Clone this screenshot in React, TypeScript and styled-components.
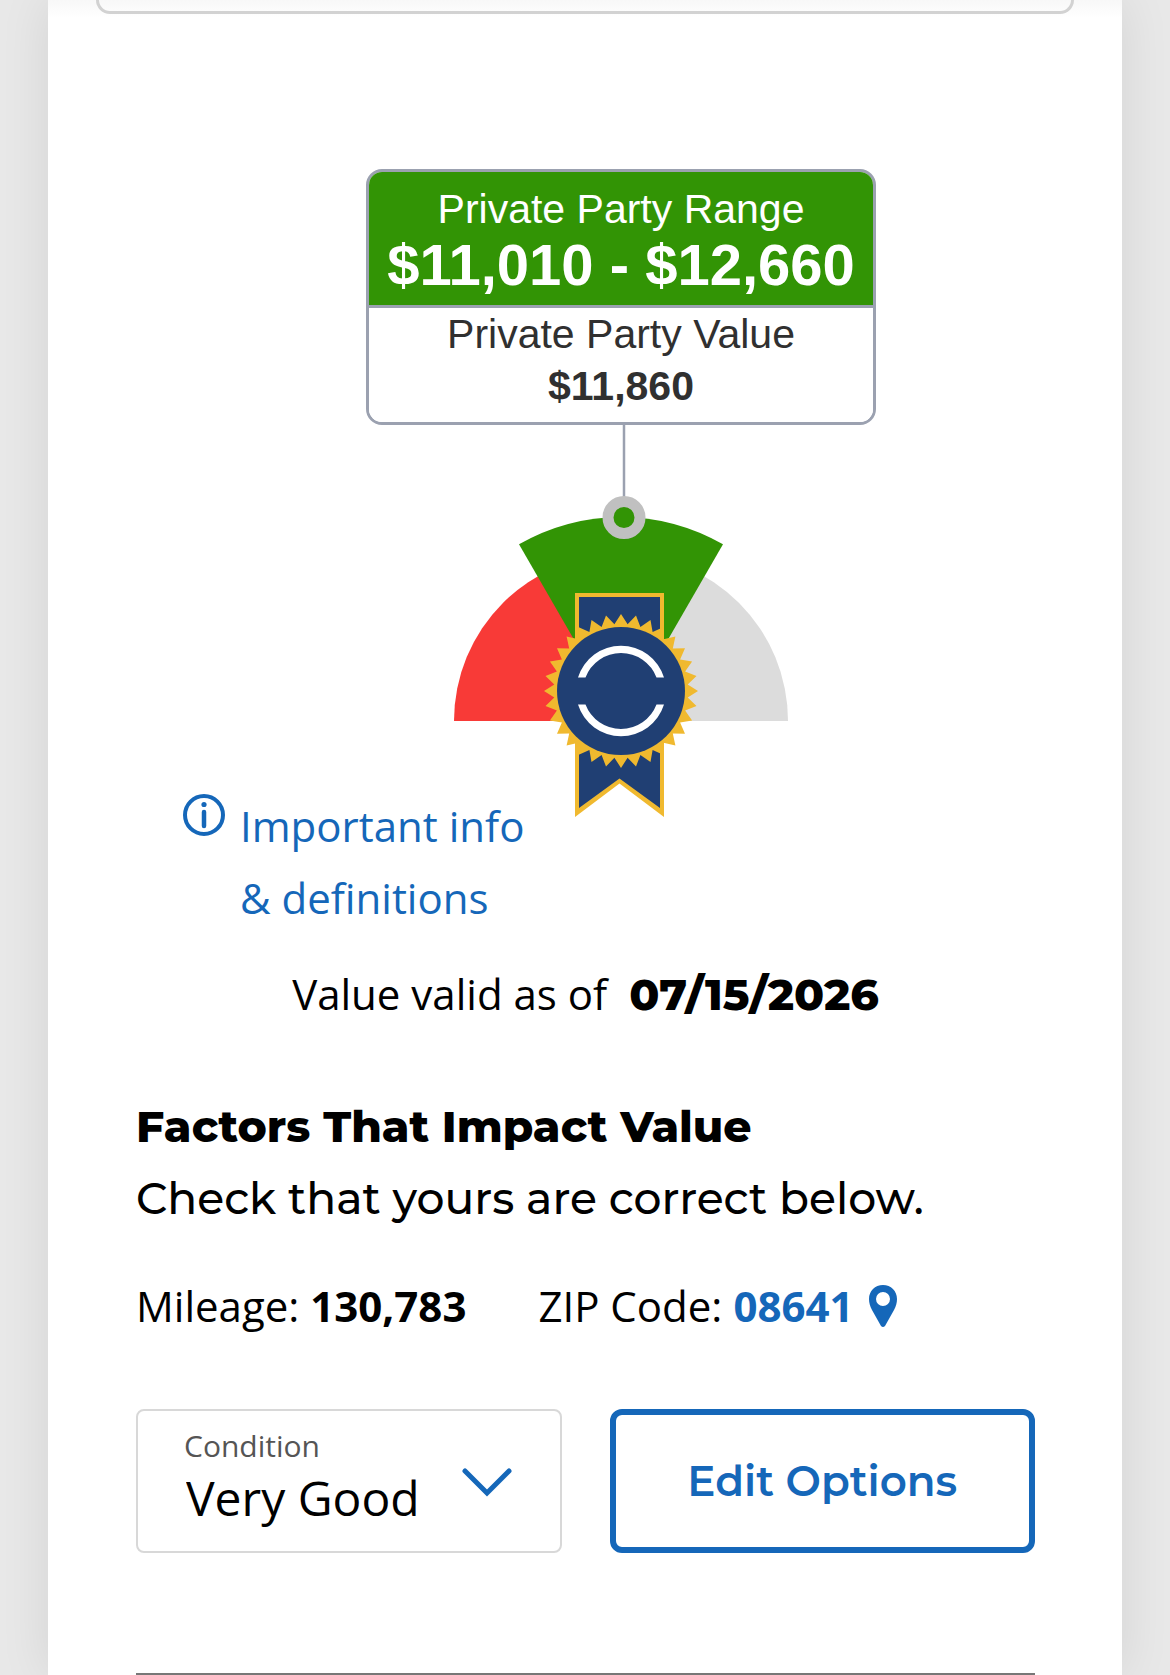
import React from "react";
import styled, { createGlobalStyle } from "styled-components";

const blue = "#1567b9";
const green = "#329405";
const gold = "#f0b92f";
const navy = "#203f73";
const slate = "#9ba1b0";

const bodyFont = `"Open Sans", "Noto Sans", sans-serif`;
const headingFont = `Montserrat, Inter, "Open Sans", sans-serif`;
const calloutFont = `"Liberation Sans", Arial, sans-serif`;

const GlobalStyle = createGlobalStyle`
  *, *::before, *::after { box-sizing: border-box; }
  body { margin: 0; background: #e8e8e8; color: #000; font-family: ${bodyFont}; }
`;

const Page = styled.div`
  padding: 0 48px;
  overflow: hidden;
`;

const Panel = styled.main`
  background: linear-gradient(#f8f8f8, #fff 18px);
  box-shadow: 0 0 48px rgba(0, 0, 0, 0.09);
`;

const PreviousCard = styled.div`
  height: 14px;
  margin: 0 48px;
  border: 3px solid #d2d2d2;
  border-top: 0;
  border-radius: 0 0 14px 14px;
`;

const Content = styled.div`
  padding: 155px 87px 0 88px;
`;

const Meter = styled.section`
  display: flex;
  flex-direction: column;
  align-items: center;
  padding-left: 71px;
`;

const Callout = styled.div`
  width: 510px;
  max-width: 100%;
  border: 3px solid ${slate};
  border-radius: 16px;
  overflow: hidden;
  font-family: ${calloutFont};
  text-align: center;
`;

const CalloutRange = styled.div`
  padding: 11px 0 10px;
  border-bottom: 3px solid ${slate};
  background: ${green};
  color: #fff;
`;

const CalloutValue = styled.div`
  padding-bottom: 10px;
  background: #fff;
  color: #303030;
`;

const CalloutLine = styled.p<{ $bold?: boolean }>`
  margin: 0;
  font-size: 41px;
  line-height: 52px;
  font-weight: ${(p) => (p.$bold ? 700 : 400)};
`;

const RangePrice = styled.p`
  margin: 0;
  font-size: 58px;
  line-height: 60px;
  font-weight: 700;
`;

const Gauge = styled.svg`
  display: block;
  max-width: 100%;
`;

const InfoLink = styled.a`
  display: flex;
  width: fit-content;
  align-items: flex-start;
  gap: 15px;
  margin: -30px 0 0 47px;
  color: ${blue};
  font-size: 42px;
  line-height: 72px;
  text-decoration: none;

  svg {
    flex: none;
    margin-top: 4px;
  }
`;

const ValidLine = styled.p`
  display: flex;
  justify-content: center;
  gap: 22px;
  margin: 24px 0 0;
  font-size: 42px;
  line-height: 72px;
`;

const ValidDate = styled.time`
  font-family: ${headingFont};
  font-size: 44px;
  font-weight: 800;
`;

const Heading = styled.h2`
  margin: 60px 0 0;
  font-family: ${headingFont};
  font-size: 44px;
  line-height: 72px;
  font-weight: 800;
`;

const Lead = styled.p`
  margin: 0;
  font-family: ${headingFont};
  font-size: 44px;
  line-height: 72px;
  font-weight: 500;
`;

const Facts = styled.div`
  display: flex;
  gap: 72px;
  margin-top: 36px;
  font-size: 42px;
  line-height: 72px;
`;

const Fact = styled.p`
  display: flex;
  gap: 11px;
  margin: 0;
`;

const ZipLink = styled.a`
  display: flex;
  align-items: center;
  gap: 16px;
  color: ${blue};
  font-weight: 700;
  text-decoration: none;
`;

const Controls = styled.div`
  display: grid;
  grid-template-columns: 1fr 1fr;
  gap: 48px;
  margin-top: 67px;
`;

const Field = styled.div`
  position: relative;
  display: flex;
  flex-direction: column;
  height: 144px;
  padding: 15px 40px 0 46px;
  border: 2px solid #d8d8d8;
  border-radius: 8px;
`;

const FieldLabel = styled.label`
  color: #555;
  font-size: 30px;
  line-height: 40px;
`;

const Select = styled.select`
  appearance: none;
  width: 100%;
  height: 64px;
  padding: 0 0 0 2px;
  border: 0;
  background: transparent;
  color: #000;
  font-family: ${bodyFont};
  font-size: 48px;
  line-height: 64px;
`;

const Chevron = styled.svg`
  position: absolute;
  right: 48px;
  top: 56px;
  pointer-events: none;
`;

const EditButton = styled.button`
  height: 144px;
  padding: 0;
  border: 6px solid ${blue};
  border-radius: 12px;
  background: #fff;
  color: ${blue};
  font-family: ${headingFont};
  font-size: 42px;
  font-weight: 600;
`;

const Divider = styled.hr`
  height: 2px;
  margin: 120px 0 0;
  border: 0;
  background: #777;
`;

const sealTeeth = Array.from({ length: 64 }, (_, i) => {
  const radius = i % 2 ? 67 : 77;
  const angle = (i * Math.PI) / 32;
  return `${(171 + radius * Math.sin(angle)).toFixed(1)},${(266 - radius * Math.cos(angle)).toFixed(1)}`;
}).join(" ");

function ValueGauge() {
  return (
    <Gauge width="342" height="395" viewBox="0 0 342 395" role="img" aria-label="Value gauge">
      <path d="M171 296H4a167 167 0 0 1 167-167z" fill="#f83a37" />
      <path d="M171 296h167a167 167 0 0 0-167-167z" fill="#dcdcdc" />
      <path d="M171 296L69 119.300a204 204 0 0 1 204 0z" fill={green} />
      <path d="M174 0v75" stroke={slate} strokeWidth="2.500" />
      <circle cx="174" cy="92.500" r="16" fill={green} stroke="#c0c0c0" strokeWidth="11" />
      <path d="M125 168h89v224l-44.500-33.500L125 392z" fill={gold} />
      <path d="M129 172h81v211l-40.500-29.500L129 383z" fill={navy} />
      <polygon points={sealTeeth} fill={gold} />
      <path
        d="M125 206l4 0 14 4-18 14zM214 206l-4 0-14 4 18 14zM125 328v-20l18 14-14 4zM214 328v-20l-18 14 14 4z"
        fill={gold}
      />
      <circle cx="171" cy="266" r="64" fill={navy} />
      <path
        d="M128 252.500a45 45 0 0 1 86 0h-7.500a38 38 0 0 0-71 0zM128 279.500a45 45 0 0 0 86 0h-7.500a38 38 0 0 1-71 0z"
        fill="#fff"
      />
    </Gauge>
  );
}

export default function App() {
  return (
    <>
      <GlobalStyle />
      <Page>
        <Panel>
          <PreviousCard />
          <Content>
            <Meter>
              <Callout>
                <CalloutRange>
                  <CalloutLine>Private Party Range</CalloutLine>
                  <RangePrice>$11,010 - $12,660</RangePrice>
                </CalloutRange>
                <CalloutValue>
                  <CalloutLine>Private Party Value</CalloutLine>
                  <CalloutLine $bold>$11,860</CalloutLine>
                </CalloutValue>
              </Callout>
              <ValueGauge />
            </Meter>

            <InfoLink href="#definitions">
              <svg width="42" height="42" viewBox="0 0 42 42" fill="none" aria-hidden="true">
                <circle cx="21" cy="21" r="19" stroke="currentColor" strokeWidth="4" />
                <path d="M21 18v14" stroke="currentColor" strokeWidth="4.500" strokeLinecap="round" />
                <circle cx="21" cy="10.500" r="2.600" fill="currentColor" />
              </svg>
              <span>
                Important info
                <br />
                &amp; definitions
              </span>
            </InfoLink>

            <ValidLine>
              <span>Value valid as of</span>
              <ValidDate dateTime="2026-07-15">07/15/2026</ValidDate>
            </ValidLine>

            <Heading>Factors That Impact Value</Heading>
            <Lead>Check that yours are correct below.</Lead>

            <Facts>
              <Fact>
                <span>Mileage:</span>
                <b>130,783</b>
              </Fact>
              <Fact>
                <span>ZIP Code:</span>
                <ZipLink href="#zip">
                  08641
                  <svg width="28" height="42" viewBox="0 0 28 42" aria-hidden="true">
                    <path
                      d="M14 0C6 0 0 6 0 14c0 4 1 7 3 11l9 16q2 2 4 0l9-16c2-4 3-7 3-11C28 6 22 0 14 0zm0 7a7 7 0 1 1 0 14 7 7 0 0 1 0-14z"
                      fill="currentColor"
                    />
                  </svg>
                </ZipLink>
              </Fact>
            </Facts>

            <Controls>
              <Field>
                <FieldLabel htmlFor="condition">Condition</FieldLabel>
                <Select id="condition" defaultValue="Very Good">
                  <option>Excellent</option>
                  <option>Very Good</option>
                  <option>Good</option>
                  <option>Fair</option>
                </Select>
                <Chevron width="50" height="30" viewBox="0 0 50 30" fill="none" aria-hidden="true">
                  <path d="M3 4l22 22L47 4" stroke={blue} strokeWidth="5" strokeLinecap="round" />
                </Chevron>
              </Field>
              <EditButton type="button">Edit Options</EditButton>
            </Controls>

            <Divider />
          </Content>
        </Panel>
      </Page>
    </>
  );
}
